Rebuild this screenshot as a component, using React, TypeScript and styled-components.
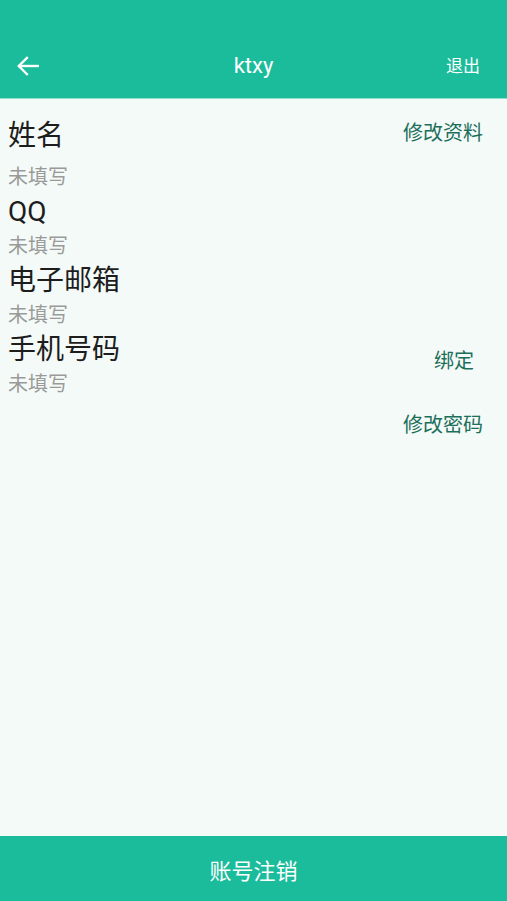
import React from 'react';
import styled, { createGlobalStyle } from 'styled-components';

const GlobalStyle = createGlobalStyle`
    html, body {
        margin: 0;
        padding: 0;
        height: 100%;
    }
    body {
        font-family: Roboto, "Noto Sans CJK SC", "Noto Sans", sans-serif;
        background: #f4faf7;
    }
    #root {
        height: 100%;
    }
`

const Page = styled.div`
    height: 100vh;
    display: flex;
    flex-direction: column;
    background: #f4faf7;
`

const Header = styled.div`
    background: #1bbc9b;
    padding-top: 35px;
    border-bottom: 1px solid #8fdfca;
`

const Toolbar = styled.div`
    height: 63px;
    display: flex;
    align-items: center;
    justify-content: space-between;
    position: relative;
    padding: 0 27px 0 14px;
    color: #ffffff;
`

const BackButton = styled.button`
    border: none;
    background: none;
    padding: 0;
    width: 28px;
    height: 28px;
    display: flex;
    align-items: center;
    justify-content: center;
    margin-top: -2px;
    cursor: pointer;
`

const Title = styled.div`
    position: absolute;
    left: 0;
    right: 0;
    text-align: center;
    font-size: 22px;
    pointer-events: none;
    margin-top: -3px;
`

const Logout = styled.span`
    font-size: 17px;
    margin-top: -4px;
`

const Content = styled.div`
    flex: 1;
    padding: 17px 0 0 8px;
    display: flex;
    flex-direction: column;
`

const Row = styled.div`
    display: flex;
    align-items: center;
    justify-content: space-between;
`

const Field = styled.div`
    display: flex;
    flex-direction: column;
`

const Label = styled.div`
    font-size: 28px;
    line-height: 40px;
    color: #1d1d1d;
`

const Hint = styled.div<{ $top?: number }>`
    font-size: 20px;
    line-height: 29px;
    color: #9a9a9a;
    margin-top: ${p => p.$top || 0}px;
`

const Action = styled.span<{ $right: number }>`
    font-size: 20px;
    line-height: 30px;
    color: #1c6f5b;
    margin-right: ${p => p.$right}px;
    margin-bottom: 7px;
`

const ActionRow = styled.div`
    display: flex;
    justify-content: flex-end;
    margin-top: 11px;
`

const Footer = styled.button`
    height: 65px;
    border: none;
    background: #1bbc9b;
    color: #ffffff;
    font-family: Roboto, "Noto Sans CJK SC", sans-serif;
    font-size: 22px;
    cursor: pointer;
`

const ArrowLeft = () => (
    <svg width="26" height="26" viewBox="0 0 24 24" fill="none" stroke="#ffffff" strokeWidth="2.2" strokeLinecap="square">
        <path d="M21 12H4" />
        <path d="M11 4.5L3.5 12L11 19.5" />
    </svg>
)

export default function App() {
    return <>
        <GlobalStyle />
        <Page>
            <Header>
                <Toolbar>
                    <BackButton><ArrowLeft /></BackButton>
                    <Title>ktxy</Title>
                    <Logout>退出</Logout>
                </Toolbar>
            </Header>
            <Content>
                <Row>
                    <Label>姓名</Label>
                    <Action $right={24}>修改资料</Action>
                </Row>
                <Hint $top={7}>未填写</Hint>
                <Label>QQ</Label>
                <Hint>未填写</Hint>
                <Label>电子邮箱</Label>
                <Hint>未填写</Hint>
                <Row>
                    <Field>
                        <Label>手机号码</Label>
                        <Hint>未填写</Hint>
                    </Field>
                    <Action $right={33}>绑定</Action>
                </Row>
                <ActionRow>
                    <Action $right={24}>修改密码</Action>
                </ActionRow>
            </Content>
            <Footer>账号注销</Footer>
        </Page>
    </>
}
